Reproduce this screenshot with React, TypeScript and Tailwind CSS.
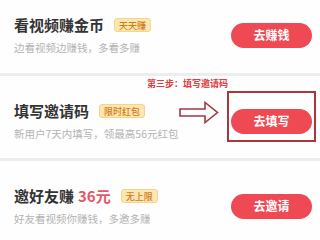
import React from "react";

function Badge({ children }: { children: React.ReactNode }) {
  return (
    <span className="ml-[10px] inline-flex h-[14px] items-center rounded-[3px] border border-[#f6d48c] bg-[#fde6b0] px-[4px] text-[9px] font-medium leading-none text-[#cf7a1a]">
      {children}
    </span>
  );
}

function Btn({ children }: { children: React.ReactNode }) {
  return (
    <div className="flex h-[25px] w-[81px] shrink-0 items-center justify-center rounded-full bg-[#ef4a54] text-[12px] font-semibold text-white">
      {children}
    </div>
  );
}

function Info({ title, sub, badge }: { title: React.ReactNode; sub: string; badge: string }) {
  return (
    <div className="flex min-w-0 flex-1 flex-col">
      <div className="flex h-[20px] items-center">
        <span className="text-[15px] font-bold leading-[20px] text-[#333333]">{title}</span>
        <Badge>{badge}</Badge>
      </div>
      <div className="mt-[6px] h-[14px] whitespace-nowrap text-[10.5px] leading-[14px] text-[#b3b3b3]">{sub}</div>
    </div>
  );
}

export default function App() {
  return (
    <div className="flex h-[239px] w-[320px] flex-col gap-[3px] overflow-hidden bg-[#ededed] font-['Noto_Sans_CJK_SC',sans-serif]">
      <div className="flex shrink-0 items-center bg-[#fefefe] pb-[18px] pl-[14px] pr-[8px] pt-[15px]">
        <Info title="看视频赚金币" sub="边看视频边赚钱，多看多赚" badge="天天赚" />
        <Btn>去赚钱</Btn>
      </div>
      <div className="relative flex shrink-0 items-center bg-[#fefefe] pb-[17px] pl-[14px] pr-[8px] pt-[25px]">
        <Info title="填写邀请码" sub="新用户7天内填写，领最高56元红包" badge="限时红包" />
        <Btn>去填写</Btn>
        <div className="absolute left-[147px] top-[2px] text-[9px] font-bold leading-[12px] text-[#e2393b]">
          第三步：填写邀请码
        </div>
        <svg className="absolute left-[179px] top-[25px]" width="40" height="23" viewBox="0 0 40 23">
          <path
            d="M1 8 L26 8 L26 1.5 L38.5 11.5 L26 21.5 L26 15 L1 15 Z"
            fill="none"
            stroke="#9e3a40"
            strokeWidth="1.6"
            strokeLinejoin="miter"
          />
        </svg>
        <div className="absolute left-[227px] top-[15px] h-[51px] w-[89px] border-2 border-solid border-[#a9373d]" />
      </div>
      <div className="flex flex-1 items-start bg-[#fefefe] pl-[14px] pr-[8px] pt-[25px]">
        <div className="flex flex-1 items-center">
          <Info
            title={
              <>
                邀好友赚<span className="ml-[4px] text-[#e2566a]">36元</span>
              </>
            }
            sub="好友看视频你赚钱，多邀多赚"
            badge="无上限"
          />
          <Btn>去邀请</Btn>
        </div>
      </div>
    </div>
  );
}
